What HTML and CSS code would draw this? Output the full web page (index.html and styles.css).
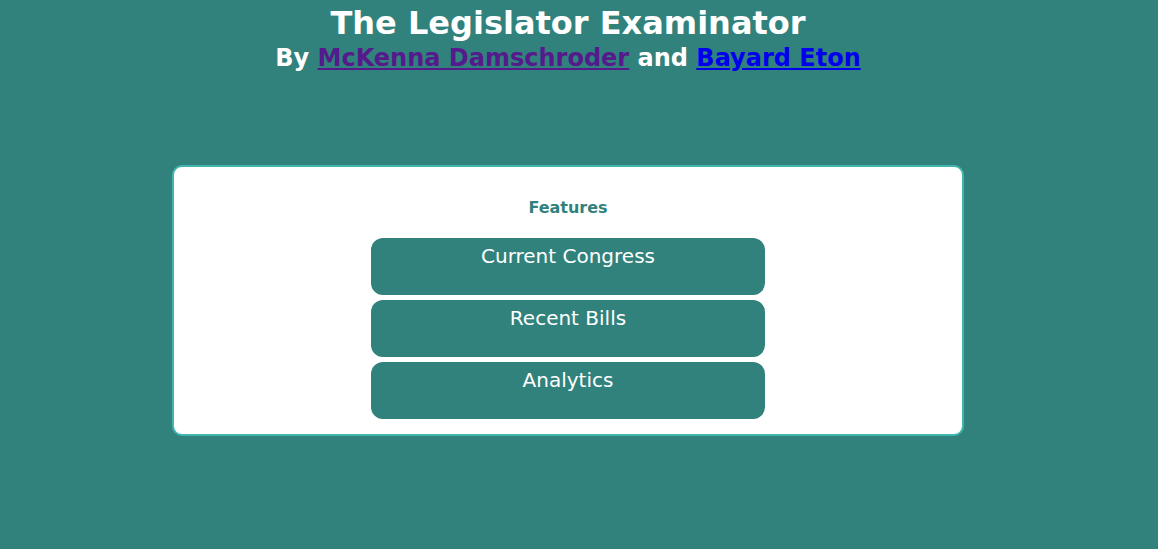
FILE: index.html
```html
<!DOCTYPE html>
<html>
<head>
<meta charset="utf-8">
<title>The Legislator Examinator</title>
<link rel="stylesheet" href="styles.css">
</head>
<body>
<header class="header">
  <h1 class="title">The Legislator Examinator</h1>
  <h2 class="byline">By <a class="link visited" href="#">McKenna Damschroder</a> and <a class="link" href="#b">Bayard Eton</a></h2>
</header>
<main class="card">
  <h3 class="card-title">Features</h3>
  <nav class="features">
    <a class="feature" href="#c">Current Congress</a>
    <a class="feature" href="#r">Recent Bills</a>
    <a class="feature" href="#a">Analytics</a>
  </nav>
</main>
</body>
</html>
```

FILE: styles.css
```css
html, body {
  margin: 0;
  padding: 0;
}
body {
  background: #31827c;
  font-family: "DejaVu Sans", Verdana, sans-serif;
  color: #fff;
  height: 549px;
  overflow: hidden;
}
.header {
  width: 1136px;
  text-align: center;
  padding-top: 4px;
}
.title {
  margin: 0;
  font-size: 32px;
  line-height: 38px;
  font-weight: bold;
}
.byline {
  margin: 0;
  padding-top: 2px;
  font-size: 24px;
  line-height: 28px;
  font-weight: bold;
}
.link {
  color: #0000ee;
  text-decoration: underline;
}
.link.visited {
  color: #551a8b;
}
.card {
  box-sizing: border-box;
  width: 792px;
  margin: 93px 0 0 172px;
  background: #fff;
  border: 2px solid #41b6ad;
  border-radius: 10px;
  padding: 31px 0 15px;
  display: flex;
  flex-direction: column;
  align-items: center;
}
.card-title {
  margin: 0 0 20px;
  font-size: 16px;
  line-height: 20px;
  color: #31827c;
  font-weight: bold;
}
.features {
  display: flex;
  flex-direction: column;
  gap: 5px;
  width: 394px;
}
.feature {
  display: block;
  height: 57px;
  box-sizing: border-box;
  padding-top: 5px;
  background: #31827c;
  border-radius: 12px;
  color: #fff;
  text-decoration: none;
  text-align: center;
  font-size: 20px;
  line-height: 26px;
}
```
